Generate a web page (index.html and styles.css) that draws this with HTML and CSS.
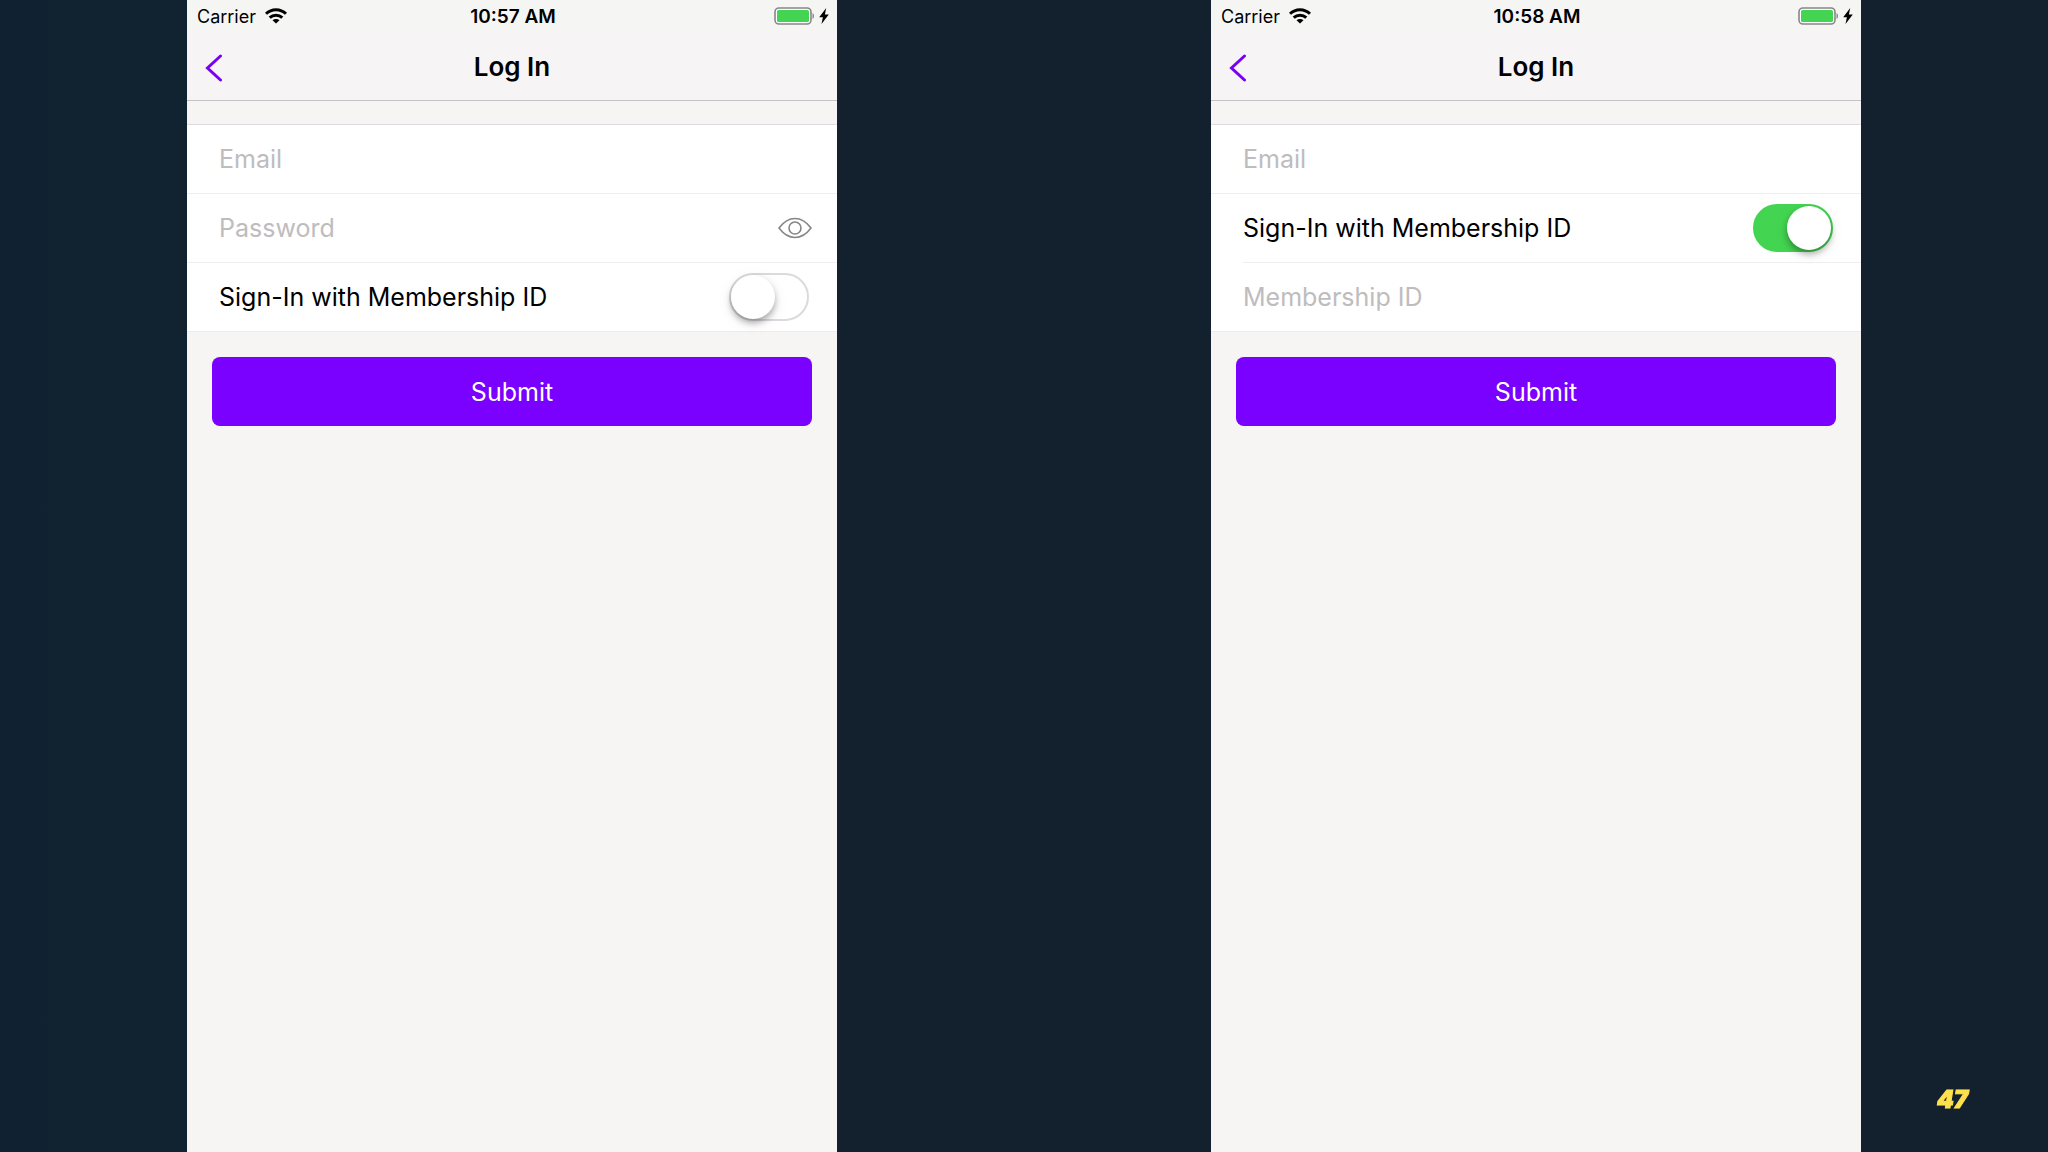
FILE: index.html
```html
<!DOCTYPE html>
<html lang="en">

<head>
    <meta charset="UTF-8" />
    <meta name="viewport" content="width=device-width, initial-scale=1" />
    <title>Log In</title>
    <link rel="stylesheet" href="styles.css">
</head>

<body>
    <!-- icons shared by both screens -->
    <svg class="sprite" aria-hidden="true">
        <symbol id="icon-wifi" viewBox="0 0 22 16">
            <g fill="none" stroke="#000" stroke-width="3">
                <path d="M1 5.800C6.600.3 15.400.3 21 5.800" />
                <path d="M4.700 9.700c3.600-3.400 9-3.400 12.600 0" />
            </g>
            <path d="M11 15.500 7.500 12.300c2-1.700 5-1.700 7 0z" />
        </symbol>
        <symbol id="icon-battery" viewBox="0 0 40 18">
            <rect x="1" y="1" width="36" height="16" rx="4" fill="#fff" stroke="#868686" stroke-width="1.600" />
            <rect x="3" y="3" width="32" height="12" rx="1.500" fill="#43d551" />
            <path d="M38.500 6c2 1 2 5 0 6z" fill="#868686" />
        </symbol>
        <symbol id="icon-bolt" viewBox="0 0 10 16">
            <path d="M7.200 0 .2 9.300h3.700L2.500 16 9.800 6.500H5.900z" />
        </symbol>
        <symbol id="icon-back" viewBox="0 0 18 28">
            <path d="M15.500 2 2.500 14l13 12" fill="none" stroke="#7a00f5" stroke-width="3" stroke-linecap="round" />
        </symbol>
        <symbol id="icon-eye" viewBox="0 0 34 22">
            <g fill="none" stroke="#868686" stroke-width="1.600">
                <path d="M1 11C5.500 5 11 1.500 17 1.500S28.500 5 33 11c-4.500 6-10 9.500-16 9.500S5.500 17 1 11z" />
                <circle cx="17" cy="11" r="6" />
            </g>
        </symbol>
    </svg>

    <main class="slide">
        <section class="phone">
            <div class="status-bar">
                <span class="carrier">Carrier <svg class="wifi"><use href="#icon-wifi" /></svg></span>
                <span class="time">10:57 AM</span>
                <span class="power">
                    <svg class="battery"><use href="#icon-battery" /></svg>
                    <svg class="bolt"><use href="#icon-bolt" /></svg>
                </span>
            </div>
            <header class="nav-bar">
                <button type="button" class="back" aria-label="Back"><svg><use href="#icon-back" /></svg></button>
                <h1>Log In</h1>
            </header>
            <form class="login">
                <div class="fields">
                    <div class="row">
                        <input type="email" name="email" placeholder="Email" aria-label="Email" />
                    </div>
                    <div class="row">
                        <input type="password" name="password" placeholder="Password" aria-label="Password" />
                        <button type="button" class="reveal" aria-label="Show password"><svg><use href="#icon-eye" /></svg></button>
                    </div>
                    <div class="row switch-row">
                        <label for="useMembership">Sign-In with Membership ID</label>
                        <input type="checkbox" id="useMembership" class="switch" />
                    </div>
                </div>
                <button type="submit" class="submit">Submit</button>
            </form>
        </section>

        <section class="phone">
            <div class="status-bar">
                <span class="carrier">Carrier <svg class="wifi"><use href="#icon-wifi" /></svg></span>
                <span class="time">10:58 AM</span>
                <span class="power">
                    <svg class="battery"><use href="#icon-battery" /></svg>
                    <svg class="bolt"><use href="#icon-bolt" /></svg>
                </span>
            </div>
            <header class="nav-bar">
                <button type="button" class="back" aria-label="Back"><svg><use href="#icon-back" /></svg></button>
                <h1>Log In</h1>
            </header>
            <form class="login">
                <div class="fields">
                    <div class="row">
                        <input type="email" name="email" placeholder="Email" aria-label="Email" />
                    </div>
                    <div class="row switch-row">
                        <label for="useMembership2">Sign-In with Membership ID</label>
                        <input type="checkbox" id="useMembership2" class="switch" checked />
                    </div>
                    <div class="row inset">
                        <input type="text" name="membershipId" placeholder="Membership ID" aria-label="Membership ID" />
                    </div>
                </div>
                <button type="submit" class="submit">Submit</button>
            </form>
        </section>
    </main>

    <span class="slide-number">47</span>
</body>

</html>
```

FILE: styles.css
```css
* {
    box-sizing: border-box;
}

body {
    margin: 0;
    font-family: Inter, "Liberation Sans", sans-serif;
    font-size: 25px;
    color: #000;
    background: #13202e;
}

.sprite {
    position: absolute;
    width: 0;
    height: 0;
}

button {
    padding: 0;
    border: none;
    background: none;
    font: inherit;
    cursor: pointer;
}

svg {
    display: block;
}

.slide {
    display: grid;
    grid-template-columns: 1fr 1fr;
    min-height: 100vh;
    background: linear-gradient(90deg, #102231, #13202e 40%);
}

.phone {
    width: 100%;
    max-width: 650px;
    margin: 0 auto;
    background: #f6f5f4;
}

/* Status bar */
.status-bar {
    display: grid;
    grid-template-columns: 1fr auto 1fr;
    align-items: center;
    height: 32px;
    padding: 0 8px 0 10px;
    font-size: 18px;
    background: #f5f6f4;
}

.carrier,
.power {
    display: flex;
    align-items: center;
    gap: 9px;
}

.power {
    justify-content: flex-end;
    gap: 5px;
}

.time {
    font-size: 19px;
    font-weight: 600;
}

.wifi {
    width: 22px;
    height: 16px;
}

.battery {
    width: 40px;
    height: 18px;
}

.bolt {
    width: 10px;
    height: 16px;
}

/* Navigation bar */
.nav-bar {
    display: grid;
    grid-template-columns: 1fr auto 1fr;
    align-items: center;
    height: 69px;
    padding: 0 18px;
    border-bottom: 1px solid #c4c2c4;
    background: #f6f4f5;
}

.nav-bar h1 {
    margin: 0;
    font-size: 26px;
    font-weight: 600;
}

.back {
    justify-self: start;
    padding-top: 3px;
}

.back svg {
    width: 18px;
    height: 28px;
}

/* Form */
.login {
    padding-top: 23px;
}

.fields {
    border-top: 1px solid #dedcdf;
    border-bottom: 1px solid #edebed;
    background: #fff;
}

.row {
    display: flex;
    align-items: center;
    height: 69px;
    padding: 0 25px 0 32px;
    border-top: 1px solid #efedef;
}

.row:first-child {
    height: 68px;
    border-top: none;
}

.row.inset {
    margin-left: 32px;
    padding-left: 0;
}

.row input:not(.switch) {
    flex: 1;
    min-width: 0;
    padding: 0;
    border: none;
    outline: none;
    font: inherit;
    background: none;
}

.row input::placeholder {
    color: #bebcbe;
    opacity: 1;
}

.switch-row {
    justify-content: space-between;
    padding-right: 28px;
}

.reveal svg {
    width: 34px;
    height: 22px;
}

.switch {
    appearance: none;
    display: flex;
    width: 80px;
    height: 48px;
    margin: 0;
    border: 2px solid #dcdadc;
    border-radius: 24px;
    background: #fff;
    cursor: pointer;
}

.switch::before {
    content: "";
    width: 44px;
    height: 44px;
    border-radius: 50%;
    background: #fff;
    box-shadow: 0 4px 6px rgba(0, 0, 0, 0.3), 0 4px 16px rgba(0, 0, 0, 0.08);
}

.switch:checked {
    justify-content: flex-end;
    border-color: #43d551;
    background: #43d551;
}

.submit {
    display: block;
    width: calc(100% - 50px);
    height: 69px;
    margin: 25px auto 0;
    border-radius: 8px;
    color: #fff;
    background: #7a00ff;
}

.slide-number {
    position: fixed;
    right: 80px;
    bottom: 36px;
    font-size: 24px;
    line-height: 32px;
    font-weight: 900;
    font-style: italic;
    color: #ffe14d;
    -webkit-text-stroke: 1px #ffe14d;
}
```
